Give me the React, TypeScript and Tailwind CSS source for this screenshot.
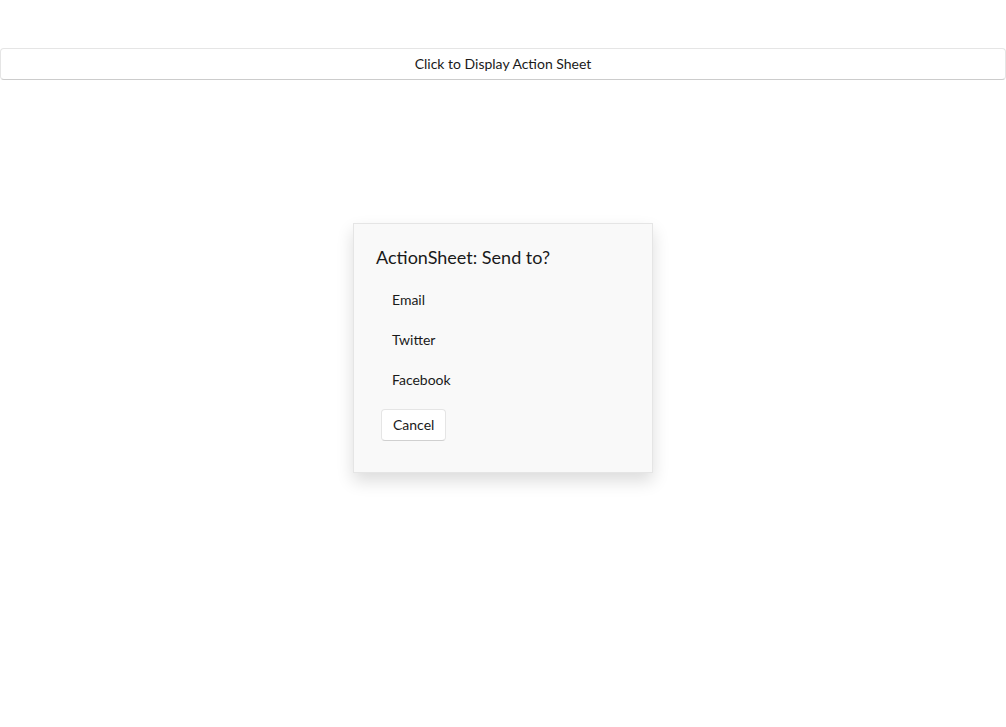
import { useState } from "react";

const options = ["Email", "Twitter", "Facebook"];

export default function App() {
  const [open, setOpen] = useState(true);

  return (
    <div className="relative w-[1006px] h-[727px] bg-white text-[#1a1a1a]" style={{ fontFamily: "Lato, 'Open Sans', sans-serif" }}>
      <div className="pt-12">
        <button
          className="w-full h-[32px] pb-[1px] bg-white border border-[#e5e5e5] border-b-[#cccccc] rounded-[4px] text-[14px] text-[#1a1a1a] flex items-center justify-center"
          onClick={() => setOpen(true)}
        >
          Click to Display Action Sheet
        </button>
      </div>

      {open && (
        <div className="absolute left-[353px] top-[223px] w-[300px] h-[250px] bg-[#f9f9f9] border border-[#e5e5e5] shadow-[0_8px_16px_rgba(0,0,0,0.14)] px-[22px] pt-[19px]">
          <h2 className="text-[18px] leading-[28px] text-[#1a1a1a]">ActionSheet: Send to?</h2>
          <div className="mt-[8px] flex flex-col">
            {options.map((o) => (
              <div key={o} className="h-[40px] flex items-center pl-[16px] text-[14px]" onClick={() => setOpen(false)}>
                {o}
              </div>
            ))}
          </div>
          <button
            className="mt-[10px] ml-[5px] h-[32px] px-[11px] pb-[2px] bg-white border border-[#e5e5e5] border-b-[#d0d0d0] rounded-[4px] text-[14px]"
            onClick={() => setOpen(false)}
          >
            Cancel
          </button>
        </div>
      )}
    </div>
  );
}
